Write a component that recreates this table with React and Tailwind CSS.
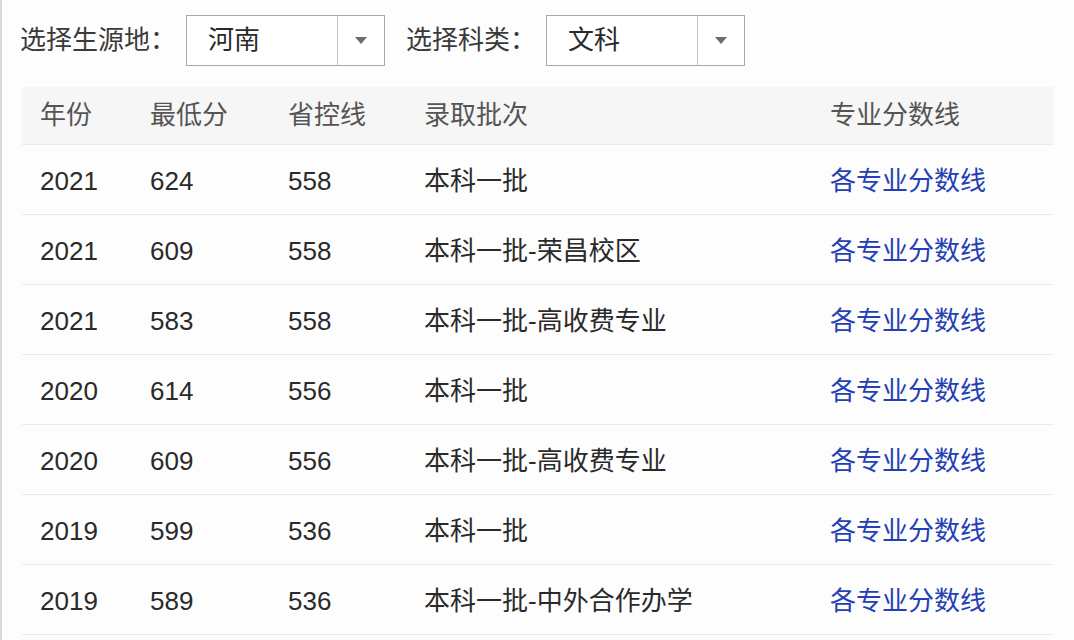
import React from 'react'

const rows = [
  ['2021', '624', '558', '本科一批'],
  ['2021', '609', '558', '本科一批-荣昌校区'],
  ['2021', '583', '558', '本科一批-高收费专业'],
  ['2020', '614', '556', '本科一批'],
  ['2020', '609', '556', '本科一批-高收费专业'],
  ['2019', '599', '536', '本科一批'],
  ['2019', '589', '536', '本科一批-中外合作办学'],
]

function Select({ value }) {
  return (
    <div className="flex h-[51px] w-[199px] items-stretch border border-[#a9a9a9] bg-white">
      <div className="flex flex-1 items-center pl-[21px] text-[26px] text-[#2a2a2a]">{value}</div>
      <div className="flex w-[47px] items-center justify-center border-l border-[#c8c8c8]">
        <svg width="12" height="7" viewBox="0 0 12 7">
          <path d="M0 0 L12 0 L6 7 Z" fill="#6b6b6b" />
        </svg>
      </div>
    </div>
  )
}

export default function App() {
  return (
    <div
      className="h-[640px] w-[1074px] overflow-hidden border-l-2 border-[#d8d8d8] bg-[#fdfdfd] text-[#333]"
      style={{ fontFamily: '"Liberation Sans", "Noto Sans CJK SC", sans-serif' }}
    >
      {/* filters */}
      <div className="flex items-center pl-[18px] pt-[15px]">
        <span className="w-[166px] text-[26px] text-[#3a3a3a]">选择生源地：</span>
        <Select value="河南" />
        <span className="ml-[21px] w-[140px] text-[26px] text-[#3a3a3a]">选择科类：</span>
        <Select value="文科" />
      </div>

      {/* table */}
      <div className="ml-[20px] mt-[21px] w-[1032px]">
        <div className="flex h-[57px] items-center bg-[#f6f6f6] pl-[18px] text-[26px] text-[#555]">
          <div className="w-[110px]">年份</div>
          <div className="w-[138px]">最低分</div>
          <div className="w-[136px]">省控线</div>
          <div className="w-[406px]">录取批次</div>
          <div className="flex-1">专业分数线</div>
        </div>
        {rows.map((r, i) => (
          <div
            key={i}
            className="flex h-[70px] items-center border-t border-[#ebebeb] pl-[18px] pt-[3px] text-[26px] text-[#2a2a2a]"
          >
            <div className="w-[110px]">{r[0]}</div>
            <div className="w-[138px]">{r[1]}</div>
            <div className="w-[136px]">{r[2]}</div>
            <div className="w-[406px]">{r[3]}</div>
            <div className="flex-1 text-[#2340b5]">各专业分数线</div>
          </div>
        ))}
        <div className="border-t border-[#ebebeb]" />
      </div>
    </div>
  )
}
